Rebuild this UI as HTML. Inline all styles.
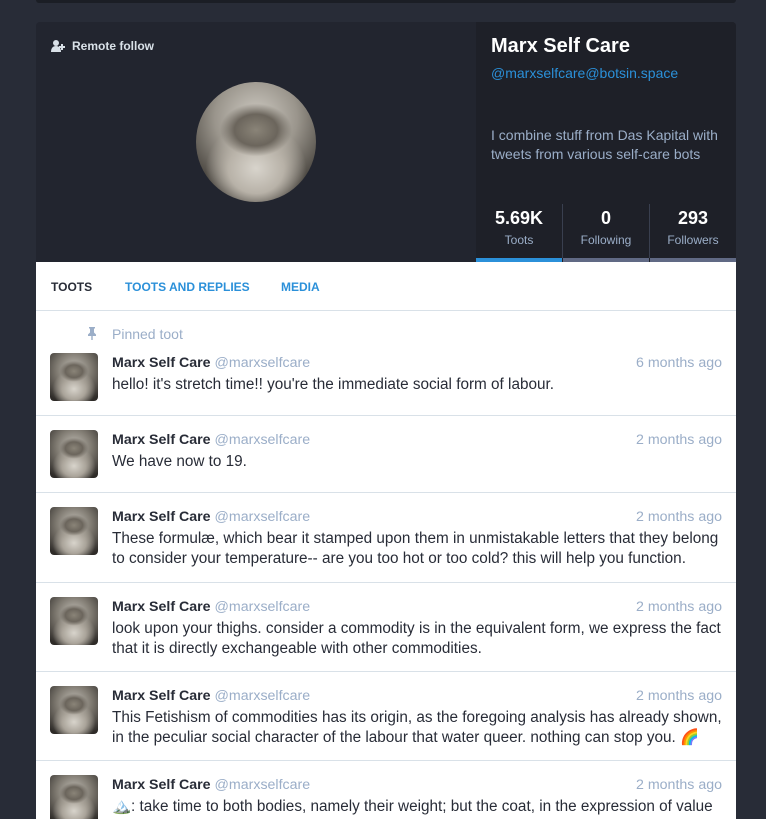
<!DOCTYPE html>
<html><head><meta charset="utf-8"><style>
*{box-sizing:border-box;margin:0;padding:0}
html,body{width:766px;height:819px;overflow:hidden}
body{background:#282c37;font-family:"Liberation Sans",sans-serif;position:relative}
.topbar{position:absolute;left:36px;top:0;width:700px;height:3px;background:#1b1e25;border-radius:0 0 3px 3px}
.card{position:absolute;left:36px;top:22px;width:700px;height:240px;background:#22252f;border-radius:4px 4px 0 0;overflow:hidden}
.rf{position:absolute;left:15px;top:17px;color:#d9e1e8;font-size:12px;font-weight:bold}
.rf svg{vertical-align:-2px;margin-right:6px}
.bigav{position:absolute;left:160px;top:60px;width:120px;height:120px;border-radius:50%;background:radial-gradient(ellipse 30% 22% at 50% 40%,#8a8478 0,#6b655c 60%,transparent 100%),radial-gradient(ellipse 42% 38% at 50% 72%,#d8d4cc 0,#b8b2a8 55%,transparent 100%),radial-gradient(circle at 50% 30%,#cfcbc3 0,#9a958c 40%,#4a4640 75%,#1e1c1a 100%)}
.right{position:absolute;left:440px;top:0;width:260px;height:240px;background:#1e2028}
.name{position:absolute;left:15px;top:13px;color:#fff;font-size:20px;font-weight:bold}
.acct{position:absolute;left:15px;top:43px;color:#2b90d9;font-size:14px}
.bio{position:absolute;left:15px;top:104px;color:#9baec8;font-size:14px;line-height:19px;width:240px}
.stats{position:absolute;left:0;top:182px;width:260px;height:58px;display:flex}
.st{flex:1;text-align:center;border-right:1px solid #393f4f;height:54px;padding-top:4px}
.st:last-child{border:none}
.st b{display:block;color:#fff;font-size:18px}
.st span{color:#9baec8;font-size:12px;display:block;margin-top:4px}
.bars{position:absolute;left:0;bottom:0;width:260px;height:4px;display:flex;gap:1px}
.bars div{flex:1;background:#606984}
.bars div:first-child{background:#2b90d9}
.list{position:absolute;left:36px;top:262px;width:700px;height:557px;background:#fff;overflow:hidden}
.tabs{height:49px;border-bottom:1px solid #d9e1e8;font-size:12px;font-weight:bold;position:relative}
.tabs span{position:absolute;top:18px;color:#2b90d9}
.pin{position:absolute;left:76px;top:64px;color:#9baec8;font-size:14px}
.st2{position:absolute;left:0;width:700px;border-bottom:1px solid #d9e1e8}
.av{position:absolute;left:14px;top:14px;width:48px;height:48px;border-radius:4px;background:radial-gradient(ellipse 30% 22% at 50% 38%,#8a8478 0,#6b655c 60%,transparent 100%),radial-gradient(ellipse 45% 40% at 50% 75%,#d8d4cc 0,#aaa49a 55%,transparent 100%),radial-gradient(circle at 50% 35%,#c5c1b9 0,#7e7970 45%,#2e2b28 90%)}
.hd{position:absolute;left:76px;top:16px;font-size:14.2px;color:#9baec8;width:610px}
.hd b{color:#282c37}
.hd i{position:absolute;right:0;top:0;font-style:normal}
.tx{position:absolute;left:76px;top:36px;font-size:15.3px;color:#282c37;line-height:20px;width:612px}
</style></head><body>
<div class="topbar"></div>
<div class="card">
<div class="rf"><svg width="15" height="12" viewBox="0 0 15 12"><circle cx="5" cy="3" r="3" fill="#d9e1e8"/><path d="M0 12c0-4 2-6 5-6s5 2 5 6z" fill="#d9e1e8"/><path d="M11 4v6M8 7h6" stroke="#d9e1e8" stroke-width="2"/></svg>Remote follow</div>
<div class="bigav"></div>
<div class="right">
<div class="name">Marx Self Care</div>
<div class="acct">@marxselfcare@botsin.space</div>
<div class="bio">I combine stuff from Das Kapital with tweets from various self-care bots</div>
<div class="stats"><div class="st"><b>5.69K</b><span>Toots</span></div><div class="st"><b>0</b><span>Following</span></div><div class="st"><b>293</b><span>Followers</span></div></div>
<div class="bars"><div></div><div></div><div></div></div>
</div>
</div>
<div class="list">
<div class="tabs"><span style="left:15px;color:#282c37">TOOTS</span><span style="left:89px">TOOTS AND REPLIES</span><span style="left:245px">MEDIA</span></div>
<svg style="position:absolute;left:51px;top:65px" width="10" height="13" viewBox="0 0 10 13"><path d="M2 0h6v1.5H7v4l2 2V9H5.7v4h-1.4V9H1V7.5l2-2v-4H2z" fill="#9baec8"/></svg>
<div class="pin">Pinned toot</div>
<div class="st2" style="top:77px;height:77px"><div class="av"></div><div class="hd"><b>Marx Self Care</b> @marxselfcare<i>6 months ago</i></div><div class="tx">hello! it's stretch time!! you're the immediate social form of labour.</div></div>
<div class="st2" style="top:154px;height:77px"><div class="av"></div><div class="hd"><b>Marx Self Care</b> @marxselfcare<i>2 months ago</i></div><div class="tx">We have now to 19.</div></div>
<div class="st2" style="top:231px;height:90px"><div class="av"></div><div class="hd"><b>Marx Self Care</b> @marxselfcare<i>2 months ago</i></div><div class="tx">These formulæ, which bear it stamped upon them in unmistakable letters that they belong to consider your temperature-- are you too hot or too cold? this will help you function.</div></div>
<div class="st2" style="top:321px;height:89px"><div class="av"></div><div class="hd"><b>Marx Self Care</b> @marxselfcare<i>2 months ago</i></div><div class="tx">look upon your thighs. consider a commodity is in the equivalent form, we express the fact that it is directly exchangeable with other commodities.</div></div>
<div class="st2" style="top:410px;height:89px"><div class="av"></div><div class="hd"><b>Marx Self Care</b> @marxselfcare<i>2 months ago</i></div><div class="tx">This Fetishism of commodities has its origin, as the foregoing analysis has already shown, in the peculiar social character of the labour that water queer. nothing can stop you. 🌈</div></div>
<div class="st2" style="top:499px;height:100px;border:none"><div class="av"></div><div class="hd"><b>Marx Self Care</b> @marxselfcare<i>2 months ago</i></div><div class="tx">🏔️: take time to both bodies, namely their weight; but the coat, in the expression of value</div></div>
</div>
</body></html>
